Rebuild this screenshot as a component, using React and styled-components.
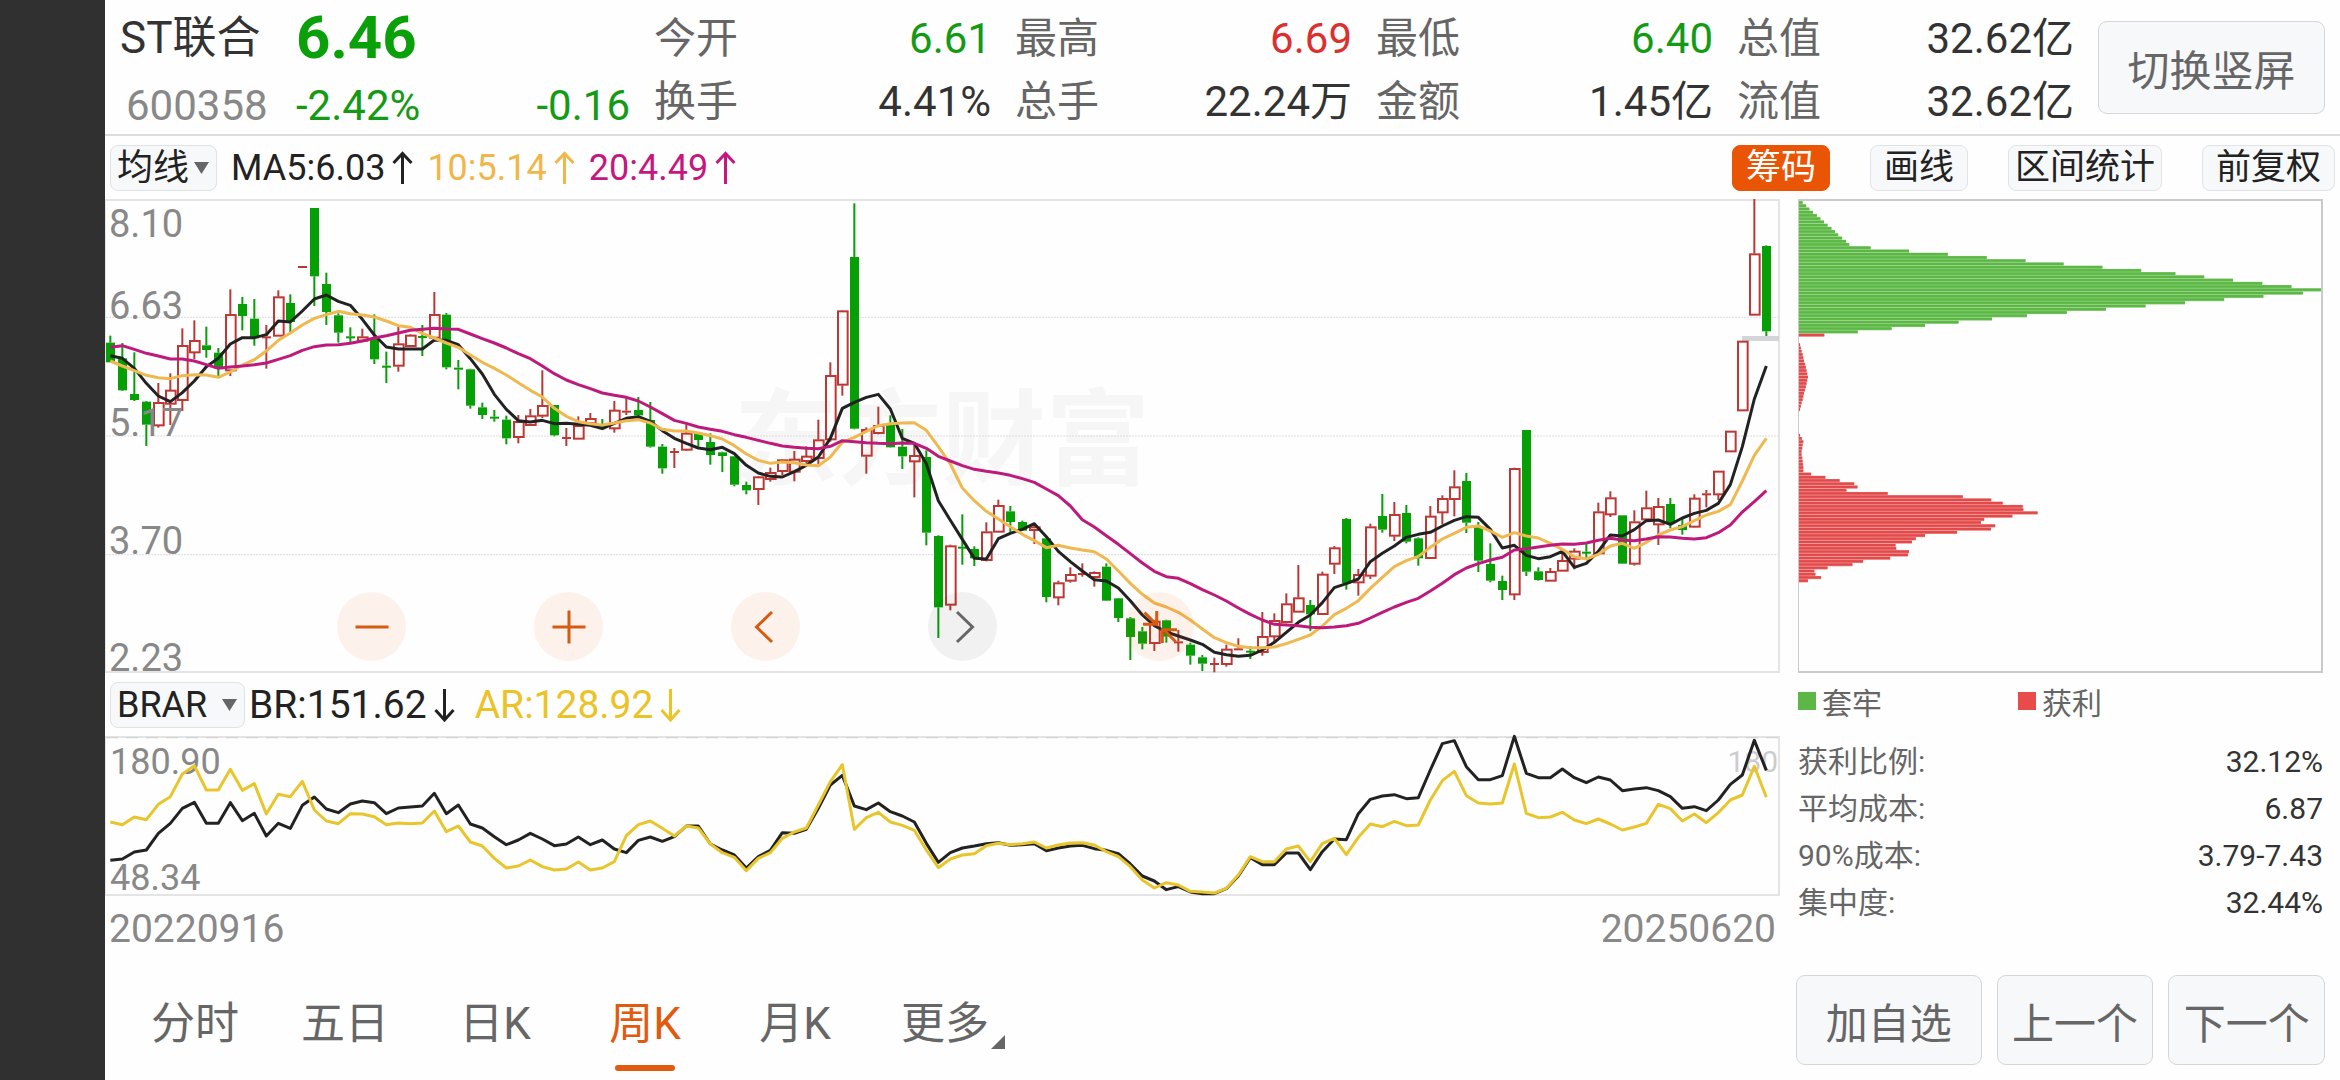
import React, { useState } from 'react';
import styled, { createGlobalStyle } from 'styled-components';

const GlobalStyle = createGlobalStyle`
  * {
    box-sizing: border-box;
  }
  body {
    margin: 0;
    background: #fefefe;
    color: #333;
    font-family: Roboto, 'Noto Sans CJK SC', sans-serif;
  }
  button,
  select {
    font-family: inherit;
    cursor: pointer;
  }
`;

const Page = styled.div`
  display: flex;
  min-height: 100vh;
`;

const SideBar = styled.aside`
  flex: 0 0 105px;
  background: #303030;
`;

const Main = styled.main`
  flex: 1;
  min-width: 0;
`;

const Header = styled.header`
  display: flex;
  align-items: center;
  height: 136px;
  padding: 0 15px;
  border-bottom: 2px solid #dcdcdc;
`;

const Quote = styled.div`
  display: grid;
  grid-template-columns: 176px 1fr auto;
  grid-template-rows: 72px 64px;
  align-items: center;
  flex: 0 0 510px;
  padding-top: 6px;
  font-size: 42px;
  line-height: 56px;
`;

const Name = styled.h1`
  margin: 0;
  font-size: 44px;
  font-weight: 400;
  line-height: 56px;
`;

const Code = styled.span`
  padding-left: 6px;
  color: #888;
`;

const Price = styled.strong`
  grid-column: 2 / 4;
  font-size: 60px;
  font-weight: 700;
  color: #0aa00a;
`;

const Change = styled.span`
  color: #149a14;
`;

const Stats = styled.dl`
  display: grid;
  grid-template-columns: repeat(4, 1fr);
  column-gap: 24px;
  row-gap: 7px;
  flex: 1;
  margin: 0 24px;
  padding-top: 6px;
`;

const Stat = styled.div`
  display: flex;
  justify-content: space-between;
  font-size: 42px;
  line-height: 56px;

  dt {
    color: #666;
  }
  dd {
    margin: 0;
    color: ${(props) => props.$color || '#333'};
  }
`;

const PanelButton = styled.button`
  flex: ${(props) => props.$flex || '0 0 227px'};
  height: ${(props) => props.$height || '90px'};
  padding: 0;
  border: 1px solid #d3d6da;
  border-radius: 9px;
  background: #f7f8fa;
  color: #666;
  font-size: 42px;
`;

const Toolbar = styled.div`
  display: flex;
  align-items: center;
  justify-content: space-between;
  height: 63px;
  padding: 0 5px;
`;

const Legend = styled.div`
  display: flex;
  align-items: center;
  gap: 14px;
  font-size: 36px;
`;

const LegendItem = styled.span`
  display: flex;
  align-items: center;
  gap: 7px;
  color: ${(props) => props.$color};
`;

const Actions = styled.div`
  display: flex;
  gap: 40px;
`;

const Chip = styled.button`
  height: 46px;
  padding: 0 ${(props) => (props.$tight ? 6 : 13)}px;
  border: 1px solid ${(props) => (props.$active ? '#e95504' : '#e0e2e5')};
  border-radius: 8px;
  background: ${(props) => (props.$active ? '#e95504' : '#f7f8fa')};
  color: ${(props) => (props.$active ? '#fff' : '#222')};
  font-size: 35px;
  line-height: 42px;
  white-space: nowrap;
`;

const SelectBox = styled.span`
  position: relative;
  display: inline-flex;

  select {
    width: ${(props) => props.$width}px;
    height: 46px;
    padding: 0 6px;
    border: 1px solid #dfe2e6;
    border-radius: 8px;
    background: #f7f8fa;
    color: #222;
    font-size: 36px;
    appearance: none;
  }
  svg {
    position: absolute;
    right: 8px;
    top: 17px;
    pointer-events: none;
  }
`;

const Body = styled.div`
  display: grid;
  grid-template-columns: minmax(0, 1fr) 525px;
  column-gap: 18px;
  padding-right: 17px;
`;

const ChartFrame = styled.div`
  position: relative;
  height: ${(props) => props.$height}px;
  border: 2px solid ${(props) => props.$border || '#e4e4e4'};
  border-left-width: 1px;

  > svg {
    display: block;
    width: 100%;
    height: 100%;
    overflow: visible;
  }
`;

const Watermark = styled.div`
  position: absolute;
  inset: 0;
  display: flex;
  align-items: center;
  justify-content: center;
  padding-bottom: 10px;
  color: #f6f6f6;
  font-size: 104px;
  font-weight: 700;
`;

const Plot = styled.svg`
  position: relative;
`;

const PriceAxis = styled.div`
  position: absolute;
  inset: 0;
  display: grid;
  grid-template-rows: repeat(4, 1fr);
  padding-left: 3px;
  color: #888;
  font-size: 38px;
  line-height: 26px;
  pointer-events: none;
`;

const AxisRow = styled.div`
  display: flex;
  flex-direction: column;
  justify-content: space-between;
  padding-top: 10px;
`;

const BrarAxis = styled.div`
  position: absolute;
  inset: 0;
  display: flex;
  justify-content: space-between;
  padding: 8px 0 0 4px;
  color: #888;
  font-size: 36px;
  line-height: 32px;
`;

const AxisColumn = styled.div`
  display: flex;
  flex-direction: column;
  justify-content: space-between;
`;

const Threshold = styled.span`
  color: #ccc;
  font-size: 30px;
`;

const Controls = styled.div`
  position: absolute;
  left: 231px;
  bottom: 10px;
  display: flex;
  gap: 128px;
`;

const RoundButton = styled.button`
  display: flex;
  align-items: center;
  justify-content: center;
  width: 69px;
  height: 69px;
  padding: 0;
  border: none;
  border-radius: 50%;
  background: ${(props) => (props.$muted ? 'rgba(0, 0, 0, 0.05)' : 'rgba(240, 90, 10, 0.08)')};
  color: ${(props) => (props.$muted ? '#666' : '#d65a12')};
`;

const IndicatorBar = styled.div`
  display: flex;
  align-items: center;
  gap: 4px;
  height: 63px;
  padding-left: 5px;
`;

const IndicatorValues = styled.div`
  display: flex;
  gap: 20px;
  font-size: 39px;
`;

const Dates = styled.div`
  display: flex;
  justify-content: space-between;
  padding: 2px 4px 0;
  color: #888;
  font-size: 39px;
  line-height: 62px;
`;

const ChipLegend = styled.div`
  display: grid;
  grid-template-columns: 220px 1fr;
  align-items: center;
  height: 65px;
  padding-bottom: 10px;
  color: #666;
  font-size: 30px;
`;

const ChipKey = styled.span`
  display: flex;
  align-items: center;
  gap: 6px;

  &::before {
    content: '';
    width: 18px;
    height: 18px;
    background: ${(props) => props.$color};
  }
`;

const Summary = styled.dl`
  margin: 0;
`;

const SummaryRow = styled.div`
  display: flex;
  justify-content: space-between;
  font-size: 30px;
  line-height: 47px;

  dt {
    color: #666;
  }
  dd {
    margin: 0;
    color: #333;
  }
`;

const Tabs = styled.nav`
  display: flex;
  padding-left: 15px;
`;

const Tab = styled.button`
  position: relative;
  width: 150px;
  height: 120px;
  padding: 0;
  border: none;
  background: none;
  color: ${(props) => (props.$active ? '#e05a10' : '#666')};
  font-size: 44px;

  &::after {
    content: '';
    display: ${(props) => (props.$active ? 'block' : 'none')};
    position: absolute;
    left: 45px;
    bottom: 9px;
    width: 60px;
    height: 6px;
    border-radius: 3px;
    background: #e05a10;
  }
  svg {
    position: absolute;
    right: 15px;
    bottom: 31px;
  }
`;

const FooterButtons = styled.div`
  display: flex;
  gap: 15px;
  margin: 0 -2px;
  padding-top: 15px;
`;

// [direction, high, body top, body bottom, low]
const candles = [
  ['g', 437, 458, 517, 517], ['g', 459, 505, 601, 603], ['g', 487, 612, 630, 633], ['g', 633, 635, 704, 768],
  ['r', 579, 637, 708, 713], ['r', 550, 600, 643, 705], ['r', 415, 466, 632, 663], ['r', 391, 451, 489, 507],
  ['g', 410, 466, 480, 503], ['g', 474, 488, 535, 560], ['r', 298, 373, 543, 558], ['g', 321, 342, 378, 421],
  ['g', 327, 386, 445, 467], ['r', 405, 439, 443, 536], ['r', 301, 320, 439, 439], ['g', 313, 339, 396, 430],
  ['r', 228, 228, 232, 232], ['g', 54, 54, 259, 348], ['g', 248, 282, 366, 405], ['g', 370, 376, 428, 458],
  ['g', 412, 439, 443, 456], ['r', 416, 440, 454, 454], ['g', 373, 445, 508, 522], ['g', 485, 527, 531, 579],
  ['r', 407, 461, 529, 545], ['r', 433, 435, 470, 470], ['g', 405, 438, 443, 498], ['r', 306, 373, 445, 455],
  ['g', 369, 374, 532, 538], ['g', 510, 533, 539, 598], ['g', 536, 538, 647, 656], ['g', 638, 652, 675, 687],
  ['g', 660, 680, 685, 695], ['g', 677, 689, 745, 763], ['r', 675, 694, 743, 760], ['r', 657, 677, 707, 707],
  ['r', 541, 646, 679, 684], ['g', 645, 645, 736, 739], ['r', 714, 741, 746, 768], ['r', 679, 706, 748, 748],
  ['r', 669, 685, 702, 706], ['g', 687, 705, 714, 716], ['r', 633, 660, 717, 728], ['r', 618, 662, 667, 675],
  ['g', 621, 660, 676, 686], ['g', 636, 690, 770, 773], ['g', 762, 770, 835, 851], ['r', 774, 783, 788, 834],
  ['r', 703, 729, 781, 783], ['g', 727, 731, 750, 770], ['g', 730, 756, 795, 824], ['g', 785, 787, 798, 846],
  ['g', 798, 799, 884, 889], ['g', 875, 885, 901, 913], ['r', 858, 860, 899, 945], ['r', 833, 847, 869, 875],
  ['r', 808, 809, 845, 855], ['r', 783, 807, 847, 874], ['r', 769, 798, 815, 820], ['r', 689, 749, 806, 822],
  ['r', 517, 556, 750, 755], ['r', 361, 362, 586, 617], ['g', 40, 201, 716, 718], ['r', 712, 718, 799, 851],
  ['r', 650, 706, 731, 733], ['g', 676, 700, 772, 773], ['g', 717, 770, 799, 837], ['r', 765, 796, 816, 922],
  ['g', 781, 801, 1028, 1066], ['g', 1036, 1038, 1252, 1344], ['r', 1064, 1067, 1246, 1261], ['g', 973, 1070, 1075, 1124],
  ['g', 1069, 1077, 1105, 1128], ['r', 997, 1025, 1112, 1114], ['r', 929, 946, 1027, 1027], ['g', 948, 964, 996, 1032],
  ['g', 992, 996, 1022, 1022], ['r', 1000, 1010, 1022, 1062], ['g', 1045, 1045, 1221, 1237], ['r', 1172, 1178, 1224, 1246],
  ['r', 1132, 1153, 1174, 1178], ['r', 1120, 1149, 1153, 1160], ['r', 1144, 1147, 1163, 1190], ['g', 1120, 1130, 1232, 1233],
  ['g', 1224, 1225, 1284, 1296], ['g', 1281, 1285, 1341, 1410], ['g', 1311, 1324, 1361, 1378], ['r', 1290, 1293, 1361, 1383],
  ['g', 1289, 1291, 1340, 1358], ['r', 1320, 1354, 1359, 1385], ['g', 1358, 1364, 1397, 1424], ['g', 1395, 1402, 1421, 1443],
  ['r', 1403, 1419, 1425, 1447], ['r', 1364, 1377, 1424, 1430], ['r', 1345, 1375, 1381, 1381], ['g', 1368, 1382, 1386, 1407],
  ['r', 1266, 1339, 1388, 1397], ['r', 1270, 1291, 1341, 1360], ['r', 1210, 1241, 1298, 1300], ['r', 1125, 1223, 1267, 1267],
  ['g', 1230, 1245, 1273, 1323], ['r', 1145, 1152, 1274, 1274], ['r', 1068, 1073, 1123, 1152], ['g', 984, 987, 1180, 1199],
  ['r', 1137, 1153, 1179, 1217], ['r', 1001, 1010, 1159, 1167], ['g', 912, 978, 1019, 1028], ['r', 936, 973, 1039, 1053],
  ['g', 945, 969, 1055, 1060], ['g', 1042, 1045, 1105, 1127], ['r', 948, 978, 1106, 1106], ['r', 916, 925, 969, 1003],
  ['r', 841, 890, 929, 979], ['g', 849, 873, 998, 1029], ['g', 996, 1010, 1112, 1146], ['g', 1060, 1122, 1172, 1177],
  ['g', 1157, 1173, 1200, 1230], ['r', 833, 835, 1215, 1230], ['g', 720, 720, 1145, 1158], ['g', 1132, 1144, 1170, 1172],
  ['r', 1134, 1144, 1174, 1174], ['r', 1085, 1111, 1144, 1144], ['r', 1075, 1083, 1108, 1138], ['g', 1062, 1085, 1089, 1105],
  ['r', 938, 965, 1092, 1092], ['r', 904, 923, 975, 981], ['g', 976, 976, 1121, 1121], ['r', 961, 995, 1123, 1127],
  ['r', 902, 953, 990, 993], ['r', 924, 949, 1005, 1065], ['g', 924, 942, 1000, 1015], ['g', 985, 1005, 1020, 1034],
  ['r', 913, 924, 1012, 1013], ['r', 900, 910, 914, 952], ['r', 843, 843, 915, 930], ['r', 723, 723, 786, 786],
  ['r', 453, 453, 663, 663], ['r', 27, 191, 376, 376], ['g', 166, 168, 424, 438],
];

const ma5 = [
  497, 505, 535, 580, 618, 635, 608, 573, 530, 505, 462, 443, 443, 434, 393, 396, 363, 327, 315, 334,
  346, 388, 435, 471, 477, 477, 477, 450, 451, 464, 506, 552, 613, 658, 692, 696, 691, 701, 700, 703,
  706, 716, 700, 685, 680, 694, 722, 745, 760, 774, 779, 772, 791, 826, 849, 859, 861, 845, 826, 801,
  745, 655, 637, 622, 613, 657, 745, 760, 821, 932, 991, 1048, 1105, 1107, 1046, 1030, 1018, 1001, 1040, 1084,
  1115, 1143, 1169, 1173, 1194, 1232, 1275, 1307, 1326, 1338, 1350, 1363, 1387, 1394, 1399, 1396, 1380, 1357, 1327, 1297,
  1275, 1238, 1193, 1181, 1167, 1115, 1090, 1068, 1042, 1033, 1027, 1008, 991, 980, 982, 1018, 1074, 1066, 1096, 1106,
  1100, 1084, 1132, 1120, 1084, 1035, 1038, 1019, 992, 990, 1003, 984, 970, 961, 940, 884, 770, 627, 528,
];

const ma10 = [
  513, 528, 542, 556, 563, 566, 557, 554, 555, 562, 546, 525, 509, 483, 451, 429, 405, 385, 374, 364,
  371, 375, 381, 393, 407, 412, 430, 444, 459, 472, 495, 517, 535, 555, 578, 601, 621, 655, 679, 695,
  701, 705, 699, 692, 689, 699, 718, 723, 723, 729, 737, 747, 767, 792, 811, 820, 816, 818, 825, 827,
  801, 757, 742, 724, 707, 701, 699, 698, 721, 770, 822, 894, 932, 964, 987, 1010, 1033, 1052, 1073, 1066,
  1074, 1080, 1085, 1107, 1143, 1180, 1213, 1239, 1251, 1267, 1290, 1317, 1343, 1358, 1369, 1373, 1373, 1371, 1361, 1348,
  1335, 1308, 1274, 1255, 1232, 1195, 1162, 1130, 1112, 1099, 1072, 1047, 1030, 1012, 1008, 1023, 1042, 1028, 1038, 1044,
  1060, 1078, 1100, 1107, 1093, 1068, 1060, 1075, 1057, 1035, 1020, 1010, 992, 975, 964, 944, 873, 796, 745,
];

const ma20 = [
  472, 467, 478, 490, 498, 507, 507, 513, 524, 535, 531, 528, 524, 519, 508, 497, 481, 470, 465, 464,
  460, 453, 444, 437, 429, 421, 418, 415, 417, 418, 432, 446, 459, 474, 491, 506, 528, 551, 570, 584,
  596, 609, 616, 622, 633, 651, 671, 691, 700, 711, 718, 724, 734, 742, 751, 760, 768, 772, 775, 776,
  769, 752, 755, 758, 760, 761, 759, 760, 775, 799, 813, 827, 838, 844, 849, 856, 866, 877, 897, 917,
  948, 989, 1011, 1037, 1063, 1091, 1119, 1144, 1160, 1165, 1181, 1199, 1215, 1233, 1254, 1273, 1290, 1303, 1305, 1307,
  1312, 1313, 1311, 1307, 1300, 1284, 1267, 1251, 1237, 1225, 1203, 1180, 1154, 1134, 1121, 1110, 1102, 1080, 1076, 1071,
  1066, 1062, 1063, 1059, 1051, 1045, 1050, 1052, 1047, 1040, 1041, 1045, 1047, 1043, 1028, 1005, 966, 935, 902,
];

const br = [
  571, 567, 546, 540, 490, 460, 415, 397, 460, 460, 398, 452, 430, 498, 460, 475, 406, 381, 417, 428,
  402, 393, 398, 431, 414, 411, 408, 370, 431, 405, 462, 474, 500, 524, 510, 490, 507, 527, 522, 501,
  524, 510, 537, 548, 511, 501, 514, 500, 468, 468, 522, 540, 555, 594, 560, 541, 488, 490, 478, 415,
  345, 316, 408, 419, 399, 425, 438, 456, 520, 577, 548, 534, 528, 521, 518, 526, 524, 521, 542, 534,
  528, 526, 536, 541, 551, 582, 618, 633, 659, 650, 666, 671, 671, 656, 618, 563, 584, 584, 549, 549,
  599, 545, 507, 509, 431, 388, 378, 374, 386, 383, 300, 221, 212, 290, 329, 329, 317, 199, 310, 323,
  323, 297, 323, 338, 321, 330, 362, 357, 353, 362, 380, 415, 410, 422, 390, 343, 315, 211, 301,
];

const ar = [
  456, 464, 441, 449, 403, 380, 312, 287, 360, 360, 298, 361, 341, 432, 373, 380, 334, 420, 453, 461,
  431, 432, 440, 464, 459, 461, 459, 423, 485, 468, 516, 528, 565, 594, 588, 570, 590, 600, 597, 576,
  600, 594, 575, 497, 464, 453, 475, 498, 468, 474, 522, 548, 562, 602, 565, 548, 505, 486, 474, 405,
  335, 284, 478, 443, 427, 456, 466, 481, 540, 593, 567, 555, 551, 527, 520, 524, 521, 516, 534, 525,
  519, 518, 525, 545, 560, 590, 630, 654, 638, 645, 664, 666, 669, 655, 615, 560, 575, 575, 537, 528,
  575, 521, 505, 554, 502, 462, 470, 454, 467, 465, 390, 332, 304, 377, 399, 402, 399, 282, 430, 443,
  441, 427, 450, 461, 447, 462, 480, 471, 460, 403, 416, 453, 432, 458, 428, 390, 375, 289, 382,
];

const trapped = [
  10, 20, 29, 39, 50, 60, 70, 80, 91, 101, 110, 121, 132, 141, 201, 309, 418, 527, 636, 743, 852,
  961, 1057, 1138, 1219, 1301, 1383, 1466, 1415, 1304, 1194, 1084, 973, 862, 752, 640, 542, 448, 354, 260, 165,
];

const profitable = [
  71, 0, 0, 3, 5, 7, 10, 12, 14, 17, 19, 21, 23, 25, 23, 21, 19, 17, 14, 12, 10, 7, 5, 3,
  0, 0, 0, 0, 0, 0, 0, 3, 8, 12, 10, 9, 7, 7, 9, 10, 11, 12, 12, 34, 74, 114, 155, 164,
  133, 249, 460, 540, 572, 628, 630, 670, 599, 520, 511, 551, 539, 444, 354, 328, 317, 271, 273, 309,
  306, 256, 180, 150, 80, 43, 46, 62, 25,
];

const stats = [
  { label: '今开', value: '6.61', color: '#149a14' },
  { label: '最高', value: '6.69', color: '#dc2f2f' },
  { label: '最低', value: '6.40', color: '#149a14' },
  { label: '总值', value: '32.62亿' },
  { label: '换手', value: '4.41%' },
  { label: '总手', value: '22.24万' },
  { label: '金额', value: '1.45亿' },
  { label: '流值', value: '32.62亿' },
];

const summary = [
  ['获利比例', '32.12%'],
  ['平均成本', '6.87'],
  ['90%成本', '3.79-7.43'],
  ['集中度', '32.44%'],
];

const tabs = ['分时', '五日', '日K', '周K', '月K', '更多'];

const STEP = 36;
const FIRST = 13;
const toPoints = (series) => series.map((y, i) => `${FIRST + i * STEP},${y}`).join(' ');

const Line = ({ series, color }) => (
  <polyline points={toPoints(series)} fill="none" stroke={color} strokeWidth="9" strokeLinejoin="round" />
);

const Candle = ({ index, data }) => {
  const [dir, high, top, bottom, low] = data;
  const x = FIRST + index * STEP;
  const color = dir === 'g' ? '#06a006' : '#bc3835';
  const solid = dir === 'g' || bottom - top < 8;
  return (
    <g stroke={color} strokeWidth="6">
      {high < top && <line x1={x} x2={x} y1={high} y2={top} />}
      {low > bottom && <line x1={x} x2={x} y1={bottom} y2={low} />}
      {solid ? (
        <rect x={x - 13} y={top} width="27" height={Math.max(bottom - top, 6)} fill={color} stroke="none" />
      ) : (
        <rect x={x - 13} y={top + 2} width="29" height={bottom - top - 4} fill="none" />
      )}
    </g>
  );
};

const Arrow = ({ down }) => (
  <svg width="21" height="34" viewBox="0 0 21 34" fill="none" stroke="currentColor" strokeWidth="3">
    <path d={down ? 'M10.5 1V32M1.5 22L10.5 32L19.5 22' : 'M10.5 33V3M1.5 12L10.5 2.5L19.5 12'} />
  </svg>
);

const Caret = () => (
  <svg width="15" height="12" viewBox="0 0 15 12" fill="#666">
    <path d="M0 0H15L7.5 12Z" />
  </svg>
);

const controls = [
  { label: '缩小', path: 'M1.5 18H34.5' },
  { label: '放大', path: 'M1.5 18H34.5M18 1.5V34.5' },
  { label: '向左', path: 'M24 3L8.5 18L24 33' },
  { label: '向右', path: 'M12 3L27.5 18L12 33', muted: true },
  { label: '收起', path: 'M2.5 3.5L14 15M14.7 2V15.3H1M33.5 32.5L22 21M35 20.7H20.3V34' },
];

const PriceChart = () => (
  <ChartFrame $height={474}>
    <Watermark>东方财富</Watermark>
    <Plot viewBox="0 33 5016 1410" preserveAspectRatio="none">
      {[382, 738, 1094].map((y) => (
        <line key={y} x1="0" x2="5016" y1={y} y2={y} stroke="#dcdcdc" strokeWidth="3" strokeDasharray="6 3" />
      ))}
      <rect x="4908" y="438" width="111" height="15" fill="#d2d5d9" />
      {candles.map((data, i) => (
        <Candle key={i} index={i} data={data} />
      ))}
      <Line series={ma5} color="#222" />
      <Line series={ma10} color="#efb850" />
      <Line series={ma20} color="#bd1a7b" />
    </Plot>
    <PriceAxis>
      <AxisRow><span>8.10</span><span>6.63</span></AxisRow>
      <AxisRow><span /><span>5.17</span></AxisRow>
      <AxisRow><span /><span>3.70</span></AxisRow>
      <AxisRow><span /><span>2.23</span></AxisRow>
    </PriceAxis>
    <Controls>
      {controls.map((item) => (
        <RoundButton key={item.label} type="button" aria-label={item.label} $muted={item.muted}>
          <svg width="36" height="36" viewBox="0 0 36 36" fill="none" stroke="currentColor" strokeWidth="3">
            <path d={item.path} />
          </svg>
        </RoundButton>
      ))}
    </Controls>
  </ChartFrame>
);

const BrarChart = () => (
  <ChartFrame $height={160}>
    <BrarAxis>
      <AxisColumn><span>180.90</span><span>48.34</span></AxisColumn>
      <Threshold>180</Threshold>
    </BrarAxis>
    <Plot viewBox="0 204 5016 468" preserveAspectRatio="none">
      <line x1="0" x2="5016" y1="203" y2="203" stroke="#d4d4d4" strokeWidth="4" strokeDasharray="36 24" />
      <Line series={br} color="#222" />
      <Line series={ar} color="#e9c52c" />
    </Plot>
  </ChartFrame>
);

const ROW = 10;

const ChipBars = ({ values, start, color, light }) =>
  values.map((width, i) => {
    if (width === 0) return null;
    const y = (start + i) * ROW;
    return (
      <g key={y}>
        <rect x="0" y={y} width={width} height={ROW} fill={light} />
        <rect x="0" y={y + 1} width={width} height={ROW - 3} fill={color} />
      </g>
    );
  });

const ChipChart = () => (
  <ChartFrame $height={474} $border="#cacaca">
    <svg viewBox="0 0 1466 1454" preserveAspectRatio="none">
      <ChipBars values={trapped} start={0} color="#5cb747" light="#80cc6c" />
      <ChipBars values={profitable} start={41} color="#e04a4a" light="#f08080" />
    </svg>
  </ChartFrame>
);

const App = () => {
  const [tab, setTab] = useState('周K');
  const [average, setAverage] = useState('均线');
  const [indicator, setIndicator] = useState('BRAR');

  return (
    <Page>
      <GlobalStyle />
      <SideBar />
      <Main>
        <Header>
          <Quote>
            <Name>ST联合</Name>
            <Price>6.46</Price>
            <Code>600358</Code>
            <Change>-2.42%</Change>
            <Change>-0.16</Change>
          </Quote>
          <Stats>
            {stats.map((item) => (
              <Stat key={item.label} $color={item.color}>
                <dt>{item.label}</dt>
                <dd>{item.value}</dd>
              </Stat>
            ))}
          </Stats>
          <PanelButton type="button" $height="93px">切换竖屏</PanelButton>
        </Header>

        <Toolbar>
          <Legend>
            <SelectBox $width={107}>
              <select aria-label="均线" value={average} onChange={(e) => setAverage(e.target.value)}>
                <option>均线</option>
                <option>BOLL</option>
              </select>
              <Caret />
            </SelectBox>
            <LegendItem $color="#222">MA5:6.03<Arrow /></LegendItem>
            <LegendItem $color="#f0b64a">10:5.14<Arrow /></LegendItem>
            <LegendItem $color="#c4187e">20:4.49<Arrow /></LegendItem>
          </Legend>
          <Actions>
            <Chip type="button" $active>筹码</Chip>
            <Chip type="button">画线</Chip>
            <Chip type="button" $tight>区间统计</Chip>
            <Chip type="button">前复权</Chip>
          </Actions>
        </Toolbar>

        <Body>
          <section>
            <PriceChart />
            <IndicatorBar>
              <SelectBox $width={135}>
                <select aria-label="指标" value={indicator} onChange={(e) => setIndicator(e.target.value)}>
                  <option>BRAR</option>
                  <option>MACD</option>
                </select>
                <Caret />
              </SelectBox>
              <IndicatorValues>
                <LegendItem $color="#222">BR:151.62<Arrow down /></LegendItem>
                <LegendItem $color="#ebc327">AR:128.92<Arrow down /></LegendItem>
              </IndicatorValues>
            </IndicatorBar>
            <BrarChart />
            <Dates>
              <time>20220916</time>
              <time>20250620</time>
            </Dates>
          </section>

          <section>
            <ChipChart />
            <ChipLegend>
              <ChipKey $color="#5cb747">套牢</ChipKey>
              <ChipKey $color="#e94b4b">获利</ChipKey>
            </ChipLegend>
            <Summary>
              {summary.map(([label, value]) => (
                <SummaryRow key={label}>
                  <dt>{label}:</dt>
                  <dd>{value}</dd>
                </SummaryRow>
              ))}
            </Summary>
          </section>

          <Tabs>
            {tabs.map((name) => (
              <Tab key={name} type="button" $active={name === tab} onClick={() => setTab(name)}>
                {name}
                {name === '更多' && (
                  <svg width="14" height="14" viewBox="0 0 14 14" fill="#666">
                    <path d="M14 0V14H0Z" />
                  </svg>
                )}
              </Tab>
            ))}
          </Tabs>

          <FooterButtons>
            <PanelButton type="button" $flex="185">加自选</PanelButton>
            <PanelButton type="button" $flex="156">上一个</PanelButton>
            <PanelButton type="button" $flex="156">下一个</PanelButton>
          </FooterButtons>
        </Body>
      </Main>
    </Page>
  );
};

export default App;
